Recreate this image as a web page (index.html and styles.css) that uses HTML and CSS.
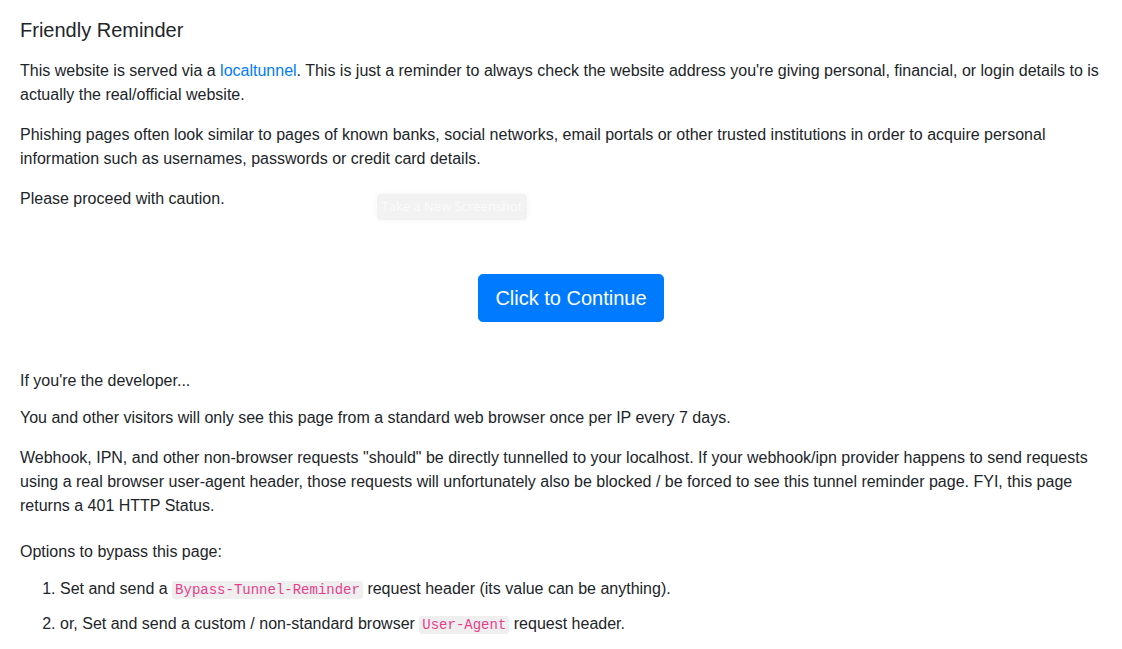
FILE: index.html
```html
<!DOCTYPE html>
<html lang="en">
<head>
<meta charset="utf-8">
<title>Friendly Reminder</title>
<link rel="stylesheet" href="styles.css">
</head>
<body>
<div class="container">
  <h5 class="title">Friendly Reminder</h5>
  <p>This website is served via a <a href="#">localtunnel</a>. This is just a reminder to always check the website address you're giving personal, financial, or login details to is actually the real/official website.</p>
  <p>Phishing pages often look similar to pages of known banks, social networks, email portals or other trusted institutions in order to acquire personal information such as usernames, passwords or credit card details.</p>
  <p>Please proceed with caution.</p>
  <div class="cta">
    <button class="btn-primary" type="button">Click to Continue</button>
  </div>
  <p class="lead-dev">If you're the developer...</p>
  <p>You and other visitors will only see this page from a standard web browser once per IP every 7 days.</p>
  <p>Webhook, IPN, and other non-browser requests "should" be directly tunnelled to your localhost. If your webhook/ipn provider happens to send requests using a real browser user-agent header, those requests will unfortunately also be blocked / be forced to see this tunnel reminder page. FYI, this page returns a 401 HTTP Status.</p>
  <p class="options">Options to bypass this page:</p>
  <ol class="bypass">
    <li>Set and send a <code>Bypass-Tunnel-Reminder</code> request header (its value can be anything).</li>
    <li>or, Set and send a custom / non-standard browser <code>User-Agent</code> request header.</li>
  </ol>
</div>
<div class="shot-btn">Take a New Screenshot</div>
</body>
</html>
```

FILE: styles.css
```css
html, body {
  margin: 0;
  padding: 0;
  background: #fff;
}

body {
  font-family: "Liberation Sans", Arial, Helvetica, sans-serif;
  font-size: 16px;
  line-height: 1.5;
  color: #212529;
}

.container {
  padding: 18px 20px 0;
}

.title {
  margin: 0 0 17px;
  font-size: 20px;
  line-height: 24px;
  font-weight: 500;
}

p {
  margin: 0 0 16px;
}

a {
  color: #007bff;
  text-decoration: none;
}

.cta {
  display: flex;
  justify-content: center;
  padding-left: 20px;
  margin: 63px 0 47px;
}

.btn-primary {
  font-family: "Liberation Sans", Arial, Helvetica, sans-serif;
  font-size: 20px;
  line-height: 30px;
  padding: 8px 16px;
  border: 1px solid #007bff;
  border-radius: 4.8px;
  background: #007bff;
  color: #fff;
  cursor: pointer;
}

.lead-dev {
  margin-bottom: 13px;
}

.options {
  margin-top: 22px;
  margin-bottom: 13px;
}

.bypass {
  margin: 0;
  padding-left: 40px;
}

.bypass li {
  margin-bottom: 11px;
}

code {
  font-family: "Liberation Mono", "Courier New", monospace;
  font-size: 14px;
  color: #e83e8c;
  background: #efefef;
  padding: 1px 3px;
  border-radius: 3px;
}

.shot-btn {
  position: absolute;
  left: 377px;
  top: 194px;
  width: 150px;
  height: 26px;
  box-sizing: border-box;
  display: flex;
  align-items: center;
  justify-content: center;
  font-family: "Open Sans", sans-serif;
  font-size: 13px;
  color: #fbfbfb;
  background: #f2f2f2;
  border-radius: 4px;
  box-shadow: 0 0 6px rgba(0, 0, 0, 0.04);
}
```
